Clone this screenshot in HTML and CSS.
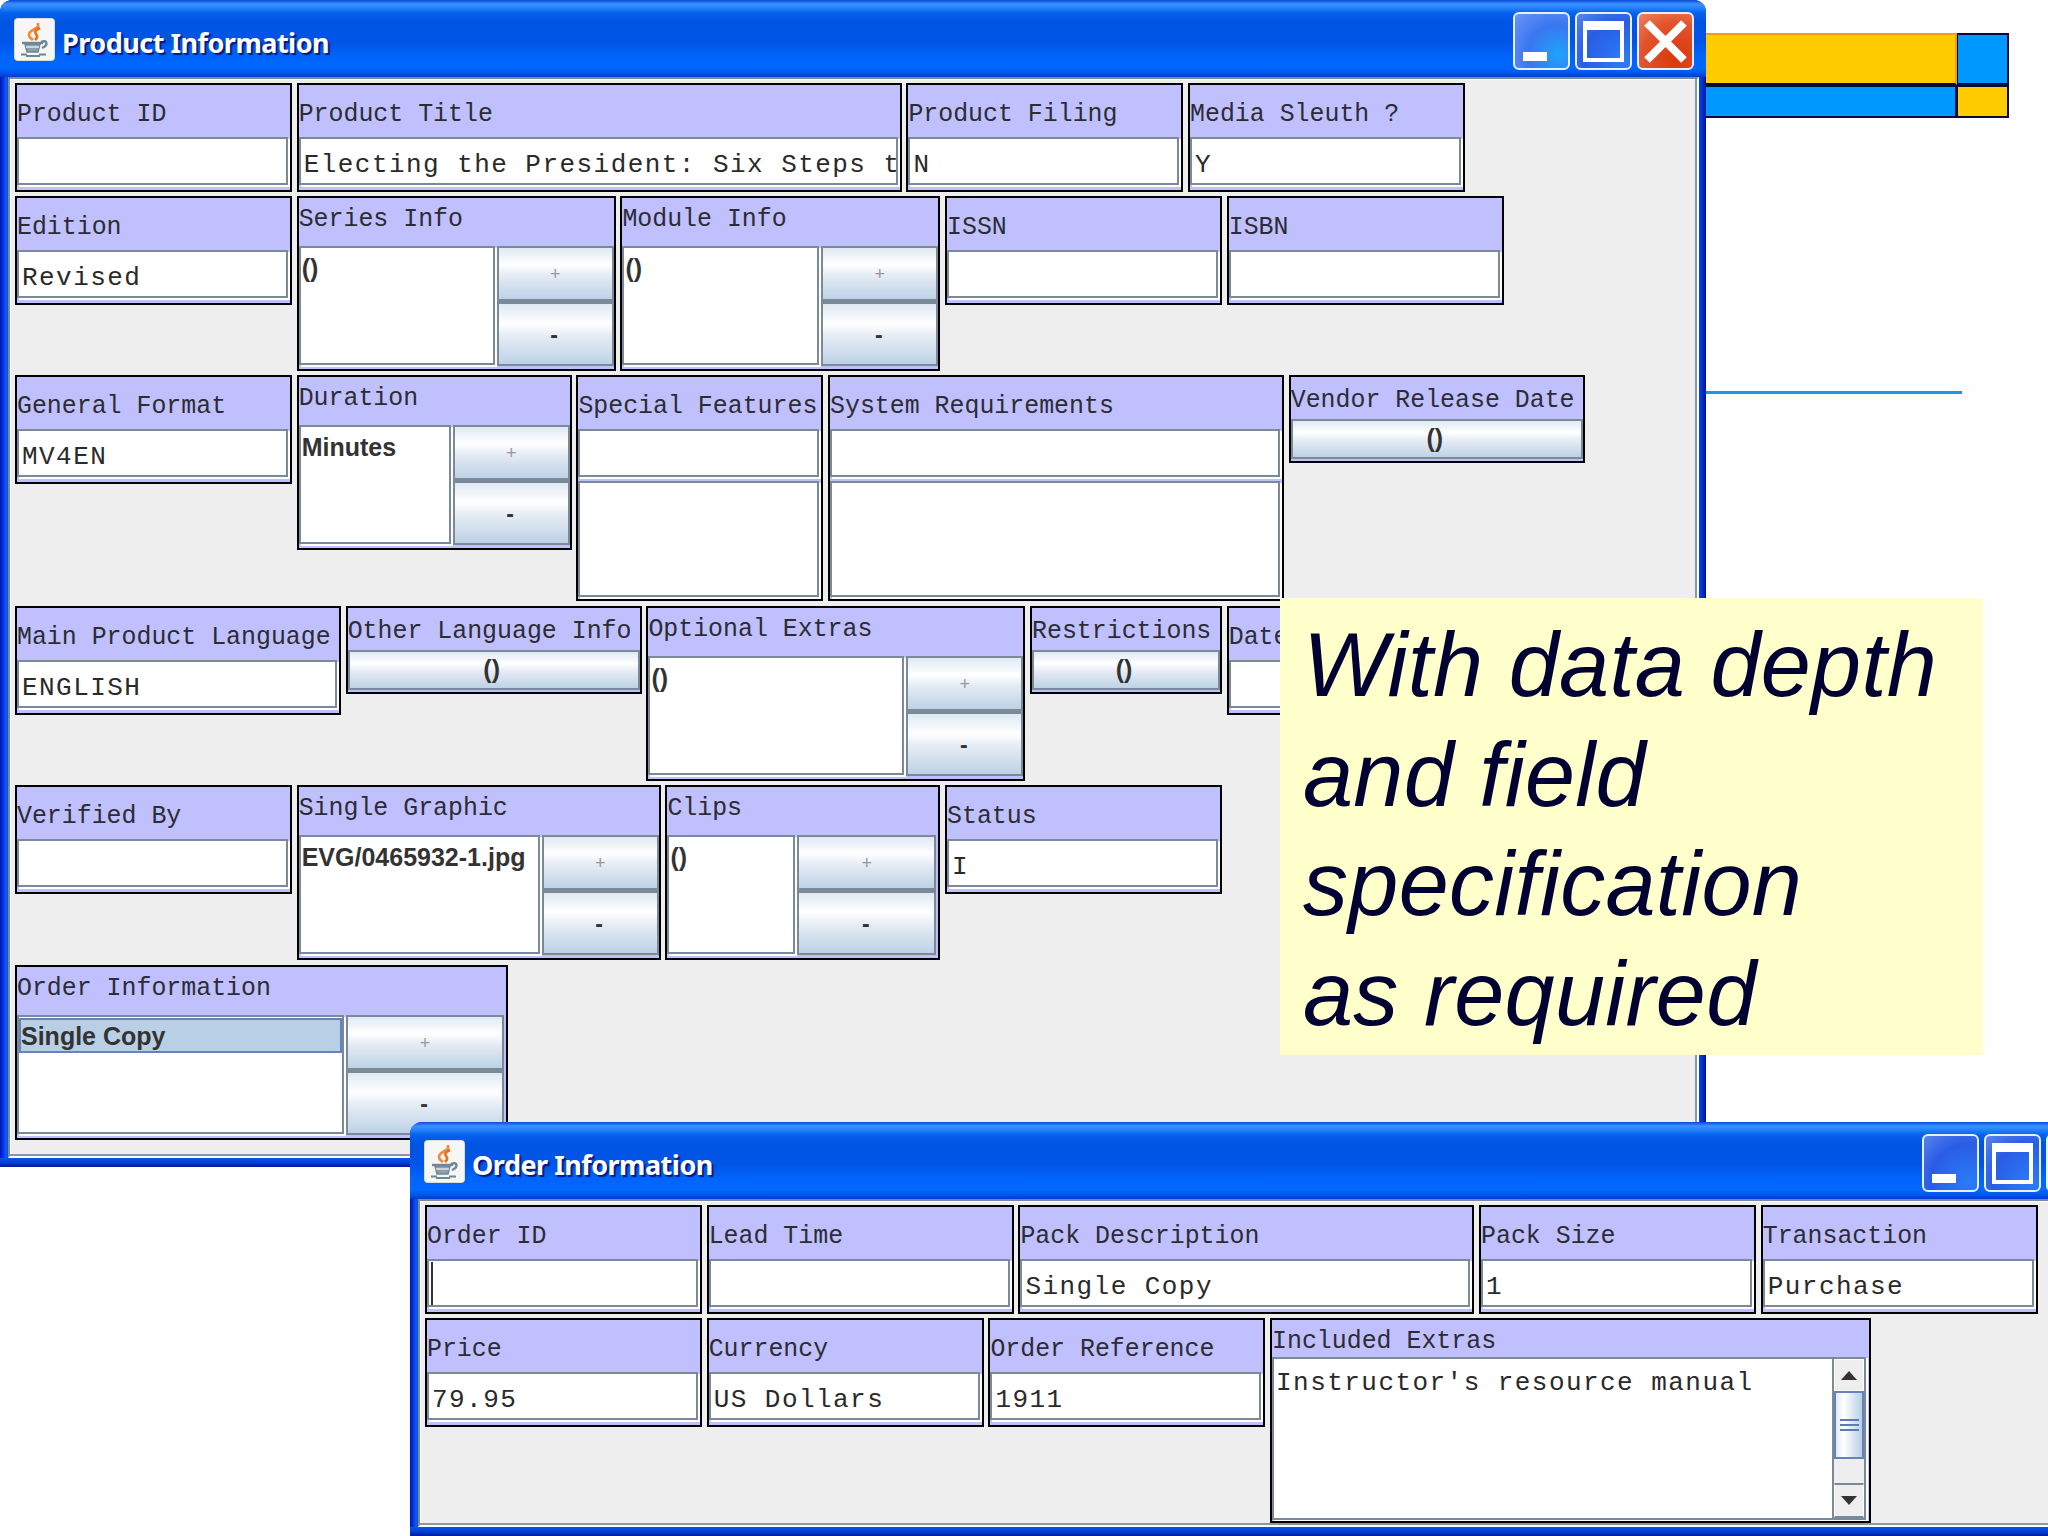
FILE: index.html
```html
<!DOCTYPE html>
<html lang="en">
<head>
  <meta charset="UTF-8">
  <title>Product Information</title>
  <meta name="viewport" content="width=device-width, initial-scale=1">
  <link rel="stylesheet" href="styles.css">
</head>
<body>

  <!-- shared icons -->
  <svg class="defs" width="0" height="0">
    <symbol id="java" viewBox="0 0 41 43">
      <rect x="0.5" y="0.5" width="40" height="42" rx="3" fill="#f6f6f4" stroke="#dcdcd6"/>
      <path d="M24 5v4c-2 2-9 3-9 8 0 3 2 3 4 5" fill="none" stroke="#f08a3c" stroke-width="2.6"/>
      <path d="M26 10c-6 3-5 4-4 6 2 3 1 4-1 6" fill="none" stroke="#e8701c" stroke-width="2.600"/>
      <path d="M8 25h21" stroke="#6f8696" stroke-width="2.400"/>
      <path d="M11 26h15l-2 8h-11z" fill="#8ba0ae" stroke="#6f8696" stroke-width="1.500"/>
      <path d="M27 24c6-3 8 3 1 6" fill="none" stroke="#6f8696" stroke-width="2.400"/>
      <path d="M12 29h13" stroke="#dfe6ea" stroke-width="1.500"/>
      <path d="M7 36.500h6M12 38h14M25 36.500h7" stroke="#6f8696" stroke-width="2.200"/>
    </symbol>
    <symbol id="close" viewBox="0 0 57 58">
      <path d="M10 11 47 48M47 11 10 48" stroke="#fff" stroke-width="8"/>
    </symbol>
  </svg>

  <!-- slide decoration -->
  <div class="deco">
    <div class="gold bar"></div><div class="blue box"></div>
    <div class="blue bar"></div><div class="gold box"></div>
  </div>
  <div class="rule"></div>

  <section class="window product">
    <header class="titlebar">
      <svg class="java"><use href="#java"/></svg>
      <h1>Product Information</h1>
      <div class="controls">
        <span class="ctl min"><i></i></span>
        <span class="ctl max"><i></i></span>
        <span class="ctl close"><svg><use href="#close"/></svg></span>
      </div>
    </header>
    <div class="content">
      <div class="row r1">
        <div class="panel"><label>Product ID</label><div class="field"></div></div>
        <div class="panel w605"><label>Product Title</label><div class="field">Electing the President: Six Steps t</div></div>
        <div class="panel"><label>Product Filing</label><div class="field">N</div></div>
        <div class="panel"><label>Media Sleuth ?</label><div class="field">Y</div></div>
      </div>
      <div class="row r2">
        <div class="panel"><label>Edition</label><div class="field">Revised</div></div>
        <div class="panel multi w319"><label>Series Info</label>
          <div class="pick"><div class="list">()</div><div class="btns"><button class="add">+</button><button>-</button></div></div>
        </div>
        <div class="panel multi w320"><label>Module Info</label>
          <div class="pick"><div class="list">()</div><div class="btns"><button class="add">+</button><button>-</button></div></div>
        </div>
        <div class="panel"><label>ISSN</label><div class="field"></div></div>
        <div class="panel"><label>ISBN</label><div class="field"></div></div>
      </div>
      <div class="row r3">
        <div class="panel"><label>General Format</label><div class="field">MV4EN</div></div>
        <div class="panel multi w275"><label>Duration</label>
          <div class="pick"><div class="list">Minutes</div><div class="btns"><button class="add">+</button><button>-</button></div></div>
        </div>
        <div class="panel area w247"><label>Special Features</label><div class="field"></div><div class="list"></div></div>
        <div class="panel area w456"><label>System Requirements</label><div class="field"></div><div class="list"></div></div>
        <div class="panel single w296"><label>Vendor Release Date</label><button>()</button></div>
      </div>
      <div class="row r4">
        <div class="panel w326"><label>Main Product Language</label><div class="field">ENGLISH</div></div>
        <div class="panel single w296"><label>Other Language Info</label><button>()</button></div>
        <div class="panel multi w379"><label>Optional Extras</label>
          <div class="pick"><div class="list">()</div><div class="btns"><button class="add">+</button><button>-</button></div></div>
        </div>
        <div class="panel single w192"><label>Restrictions</label><button>()</button></div>
        <div class="panel"><label>Date</label><div class="field"></div></div>
      </div>
      <div class="row r5">
        <div class="panel"><label>Verified By</label><div class="field"></div></div>
        <div class="panel multi w364"><label>Single Graphic</label>
          <div class="pick"><div class="list">EVG/0465932-1.jpg</div><div class="btns"><button class="add">+</button><button>-</button></div></div>
        </div>
        <div class="panel multi clips"><label>Clips</label>
          <div class="pick"><div class="list">()</div><div class="btns"><button class="add">+</button><button>-</button></div></div>
        </div>
        <div class="panel"><label>Status</label><div class="field">I</div></div>
      </div>
      <div class="row r6">
        <div class="panel multi order"><label>Order Information</label>
          <div class="pick"><div class="list"><div class="selected">Single Copy</div></div><div class="btns"><button class="add">+</button><button>-</button></div></div>
        </div>
      </div>
    </div>
  </section>

  <div class="note">With data depth<br>and field<br>specification<br>as required</div>

  <section class="window orders">
    <header class="titlebar">
      <svg class="java"><use href="#java"/></svg>
      <h1>Order Information</h1>
      <div class="controls">
        <span class="ctl min"><i></i></span>
        <span class="ctl max"><i></i></span>
        <span class="ctl close"></span>
      </div>
    </header>
    <div class="content">
      <div class="row r1">
        <div class="panel"><label>Order ID</label><div class="field"><span class="caret"></span></div></div>
        <div class="panel w307"><label>Lead Time</label><div class="field"></div></div>
        <div class="panel w456"><label>Pack Description</label><div class="field">Single Copy</div></div>
        <div class="panel"><label>Pack Size</label><div class="field">1</div></div>
        <div class="panel"><label>Transaction</label><div class="field">Purchase</div></div>
      </div>
      <div class="row">
        <div class="panel"><label>Price</label><div class="field">79.95</div></div>
        <div class="panel"><label>Currency</label><div class="field">US Dollars</div></div>
        <div class="panel"><label>Order Reference</label><div class="field">1911</div></div>
        <div class="panel extras"><label>Included Extras</label>
          <div class="memo">
            <div class="text">Instructor's resource manual</div>
            <div class="scroll">
              <span class="arrow"><i class="up"></i></span>
              <span class="thumb"><i></i></span>
              <span class="track"></span>
              <span class="arrow"><i class="down"></i></span>
            </div>
          </div>
        </div>
      </div>
    </div>
  </section>

</body>
</html>
```
FILE: styles.css
```css
* { box-sizing: border-box; }

body {
  margin: 0;
  width: 2048px;
  height: 1536px;
  overflow: hidden;
  position: relative;
  background: #fefefe;
  font-family: "Liberation Sans", Arial, sans-serif;
}

.defs { position: absolute; }

/* slide decoration */
.deco {
  position: absolute;
  left: 1600px;
  top: 33px;
  display: grid;
  grid-template-columns: 357px 52px;
  grid-template-rows: 52px 33px;
}

.gold { background: #ffcc00; }
.blue { background: #0099ff; }

.deco div { border: 2px solid #0a0a3c; border-left-width: 1px; }
.deco .gold.bar { border-color: #f79a0c #f79a0c #0a0a3c; }

.rule {
  position: absolute;
  left: 1700px;
  top: 391px;
  width: 262px;
  height: 3px;
  background: #1b97ea;
}

/* windows */
.window {
  position: absolute;
  display: flex;
  flex-direction: column;
  background:
    linear-gradient(#0855e8, #0040d8 50%, #00189c) bottom / 100% 9px no-repeat,
    linear-gradient(to right, #0014b8 0, #0831d9 3px, #0a5cf0 6px, #0048dc 9px, #0048dc calc(100% - 7px), #0831d9 calc(100% - 4px), #00138c 100%);
  border-radius: 12px 12px 0 0;
}

.product { left: 0; top: 0; width: 1706px; height: 1167px; padding: 0 7px 9px 8px; }
.orders { left: 410px; top: 1122px; width: 1705px; height: 414px; padding: 0 7px 9px 8px; }

.titlebar {
  height: 77px;
  flex: none;
  margin: 0 -7px 0 -8px;
  padding: 12px 12px 0 14px;
  display: flex;
  align-items: flex-start;
  border-radius: 12px 12px 0 0;
  background: linear-gradient(#0a48d8 0, #3a92ff 4px, #2a86fc 7px, #0562ec 13px, #0054e3 22px, #0055e6 42px, #0064fb 56px, #0068ff 68px, #0055e8 73px, #003ccc 77px);
}

.java { width: 41px; height: 43px; margin-top: 6px; }

h1 {
  margin: 13px 0 0 7px;
  font-family: "Noto Sans", sans-serif;
  font-size: 27px;
  line-height: 36px;
  font-weight: bold;
  letter-spacing: -0.500px;
  color: #fff;
  text-shadow: 2px 2px 1px #0a1883;
}

.controls { display: flex; gap: 5px; margin-left: auto; }

.ctl {
  width: 57px;
  height: 58px;
  border: 2px solid #e8efff;
  border-radius: 6px;
  background: radial-gradient(circle at 85% 85%, #2a7cf8, #2a5ce4 60%, #5a84f0 100%);
  display: block;
}

.ctl i { display: block; }
.min i { margin: 38px 0 0 8px; width: 24px; height: 9px; background: #fff; }
.max i { margin: 7px 0 0 6px; width: 41px; height: 41px; border: 4px solid #fff; border-top-width: 9px; }
.ctl.close { background: radial-gradient(circle at 70% 80%, #d8380c, #e2532c 60%, #ee8462 100%); }
.close svg { display: block; width: 57px; height: 58px; margin: -2px; }

.product .ctl.min { background: radial-gradient(circle at 80% 75%, #1ea4fc, #3a76f0 50%, #6a96f8 100%); }

.content {
  flex: 1;
  min-height: 0;
  background: #eeeeee;
  border: 2px solid #7a8a99;
  border-right-color: #fff;
  border-bottom-color: #fff;
  box-shadow: inset -2px -2px #8a97a4, inset 1px 1px #fff;
  padding: 4px 0 0 5px;
}

/* form rows */
.row {
  display: flex;
  align-items: flex-start;
  gap: 4.700px;
}

.r1 { height: 113px; }
.r2, .r4 { height: 179px; }
.r3 { height: 231px; }
.r5 { height: 180px; }

.panel {
  flex: none;
  width: 277px;
  height: 109px;
  border: 2px solid #000;
  background: #c0c0ff;
  display: flex;
  flex-direction: column;
}

.w192 { width: 192px; }
.w247 { width: 247px; }
.w275 { width: 275px; }
.w296 { width: 296px; }
.w307 { width: 307px; }
.w319 { width: 319px; }
.w320 { width: 320px; }
.w326 { width: 326px; }
.w364 { width: 364px; }
.w379 { width: 379px; }
.w456 { width: 456px; }
.w605 { width: 605px; }

label {
  height: 52px;
  flex: none;
  padding-top: 15px;
  font: 24.900px/28px "Liberation Mono", monospace;
  color: #2c2c34;
  white-space: pre;
  overflow: hidden;
}

.field {
  height: 48px;
  flex: none;
  margin-right: 2px;
  padding: 11px 0 0 3px;
  background: #fff;
  border: 2px solid #7a8a99;
  box-shadow: 2px 2px #fff;
  font: 26px/30px "Liberation Mono", monospace;
  letter-spacing: 1.450px;
  color: #2a2a2a;
  white-space: pre;
  overflow: hidden;
}

.caret { display: block; width: 2px; height: 43px; margin: -10px 0 0 -1px; background: #333; }

/* list with add / remove buttons */
.multi { height: 175px; }
.multi label { height: 48px; padding-top: 7px; }

.pick {
  height: 120px;
  display: grid;
  grid-template-columns: 1fr 117px;
  gap: 2px;
}

.clips { width: 275px; }
.clips .pick { grid-template-columns: 1fr 139px; padding-right: 2px; }
.order { width: 493px; }
.order .pick { grid-template-columns: 1fr 158px; padding-right: 2px; }

.list {
  min-width: 0;
  height: 119px;
  border: 2px solid #7a8a99;
  box-shadow: 2px 2px #fff;
  background: #fff;
  padding: 5px 0 0 1px;
  font: bold 25px/30px "Liberation Sans", Arial, sans-serif;
  color: #333;
}

.order .list { padding: 1px 0 0 0; }

.selected {
  height: 35px;
  padding-top: 1px;
  background: #b8cfe5;
  border: 2px solid #6382bf;
}

.btns { display: flex; flex-direction: column; }

button {
  display: block;
  width: 100%;
  height: 64px;
  padding: 2px 2px 0 0;
  border: 2px solid #7a8a99;
  background: linear-gradient(#dfe9f3, #fff 32%, #e4ebf4 55%, #bdd2e6);
  font: bold 23px/30px "Liberation Sans", Arial, sans-serif;
  color: #333;
}

.add { height: 56px; padding: 0; border-bottom-width: 3px; font-weight: normal; font-size: 18px; color: #999; }

.single { height: 88px; }
.single label { height: 42px; padding-top: 9px; }
.single button { height: 40px; padding: 0 4px 2px 0; font-size: 25px; }

.area { height: 226px; }
.area .list { margin: 4px 2px 0 0; height: 116px; }

/* callout */
.note {
  position: absolute;
  left: 1280px;
  top: 598px;
  width: 703px;
  height: 457px;
  padding: 13px 0 0 23px;
  background: #ffffcc;
  color: #000033;
  font-size: 90px;
  line-height: 109.500px;
  letter-spacing: 0.300px;
  font-style: italic;
}

/* memo box with scrollbar */
.extras { width: 601px; height: 205px; }
.extras label { height: 37px; padding-top: 7px; }

.memo {
  height: 163px;
  margin-right: 3px;
  display: flex;
  border: 2px solid #7a8a99;
  box-shadow: 2px 1px #fff;
  background: #fff;
}

.text {
  flex: 1;
  padding: 9px 0 0 2px;
  font: 26px/30px "Liberation Mono", monospace;
  letter-spacing: 1.450px;
  color: #2a2a2a;
  white-space: pre;
}

.scroll {
  width: 32px;
  border-left: 2px solid #7a8a99;
  background: #eee;
  display: flex;
  flex-direction: column;
}

.arrow { height: 32px; display: flex; align-items: center; justify-content: center; border: 1px solid #fff; }
.arrow:last-child { border-top: 2px solid #7a8a99; border-bottom: 2px solid #7a8a99; height: 35px; }
.up, .down { border: 8px solid transparent; border-top-width: 0; border-bottom: 9px solid #333; }
.down { transform: rotate(180deg); }

.thumb {
  height: 68px;
  border: 2px solid #6382bf;
  background: linear-gradient(to right, #dfe9f5, #fff 30%, #b8cfe5);
  display: flex;
  align-items: center;
  justify-content: center;
}

.thumb i { width: 19px; height: 12px; border: solid #5a7bb8; border-width: 2px 0; background: linear-gradient(transparent 3px, #5a7bb8 3px, #5a7bb8 5px, transparent 5px); }
.track { flex: 1; }
```
